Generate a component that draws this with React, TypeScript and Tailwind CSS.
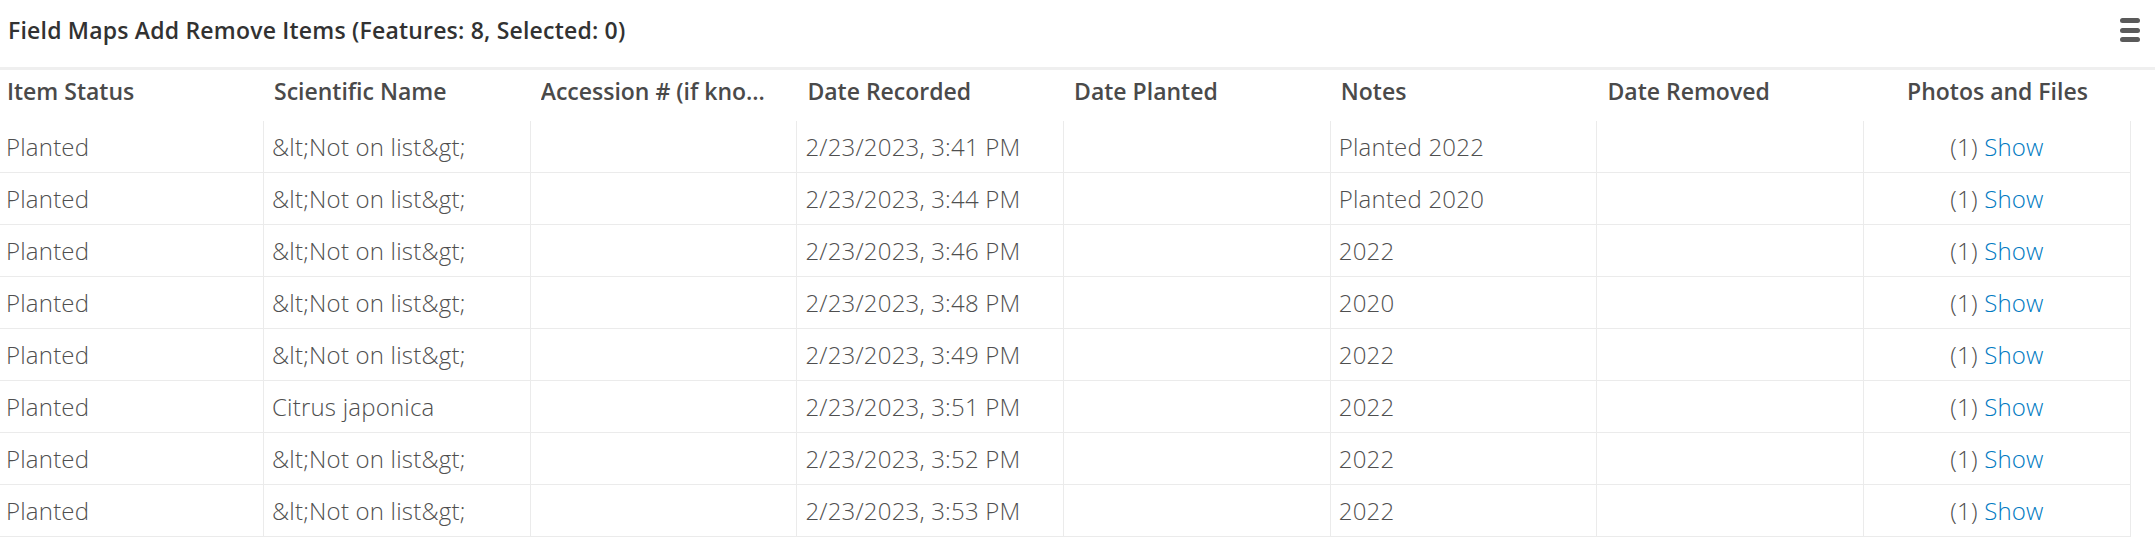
import React from "react";

const columns = [
  { label: "Item Status", first: true },
  { label: "Scientific Name" },
  { label: "Accession # (if known)", max: "max-w-[234px]" },
  { label: "Date Recorded" },
  { label: "Date Planted" },
  { label: "Notes" },
  { label: "Date Removed" },
  { label: "Photos and Files", center: true },
];

const rows = [
  { status: "Planted", name: "&lt;Not on list&gt;", recorded: "2/23/2023, 3:41 PM", notes: "Planted 2022" },
  { status: "Planted", name: "&lt;Not on list&gt;", recorded: "2/23/2023, 3:44 PM", notes: "Planted 2020" },
  { status: "Planted", name: "&lt;Not on list&gt;", recorded: "2/23/2023, 3:46 PM", notes: "2022" },
  { status: "Planted", name: "&lt;Not on list&gt;", recorded: "2/23/2023, 3:48 PM", notes: "2020" },
  { status: "Planted", name: "&lt;Not on list&gt;", recorded: "2/23/2023, 3:49 PM", notes: "2022" },
  { status: "Planted", name: "Citrus japonica", recorded: "2/23/2023, 3:51 PM", notes: "2022" },
  { status: "Planted", name: "&lt;Not on list&gt;", recorded: "2/23/2023, 3:52 PM", notes: "2022" },
  { status: "Planted", name: "&lt;Not on list&gt;", recorded: "2/23/2023, 3:53 PM", notes: "2022" },
];

const gridCols = "grid grid-cols-[264px_repeat(7,266.7px)] w-[2131px]";

function Cell({ children, center, first }: { children?: React.ReactNode; center?: boolean; first?: boolean }) {
  return (
    <div
      className={
        "flex items-center border-r border-[#ebebeb] overflow-hidden whitespace-nowrap " +
        (first ? "pl-[6px] pr-2 " : "px-2 ") +
        (center ? "justify-center" : "")
      }
    >
      {children}
    </div>
  );
}

export default function App() {
  return (
    <div className="w-[2155px] h-[544px] bg-white overflow-hidden" style={{ fontFamily: "'Open Sans', Lato, sans-serif" }}>
      <div className="h-[67px] flex items-start justify-between pl-2 pr-[15px]">
        <h1 className="pt-[13px] text-[23px] font-semibold text-[#323232] tracking-[0.2px]">
          Field Maps Add Remove Items (Features: 8, Selected: 0)
        </h1>
        <div className="mt-[18px] flex flex-col gap-[4.5px] w-5">
          <span className="block h-[5px] rounded-full bg-[#5a5a5a]" />
          <span className="block h-[5px] rounded-full bg-[#5a5a5a]" />
          <span className="block h-[5px] rounded-full bg-[#5a5a5a]" />
        </div>
      </div>
      <div className="h-[3px] bg-[#efefef]" />

      <div className={gridCols + " h-[51px]"}>
        {columns.map((c) => (
          <div
            key={c.label}
            className={
              "flex items-center pb-2 text-[23px] font-semibold text-[#4a4a4a] min-w-0 " +
              (c.first ? "pl-[7px] pr-[10px] " : "px-[10px] ") +
              (c.center ? "justify-center" : "")
            }
          >
            <span className={"truncate " + (c.max ?? "")}>{c.label}</span>
          </div>
        ))}
      </div>

      {rows.map((r, i) => (
        <div key={i} className={gridCols + " h-[52px] border-b border-[#ebebeb] text-[24px] font-light text-[#4f4f4f] tracking-[0.2px]"}>
          <Cell first>{r.status}</Cell>
          <Cell>{r.name}</Cell>
          <Cell />
          <Cell>{r.recorded}</Cell>
          <Cell />
          <Cell>{r.notes}</Cell>
          <Cell />
          <Cell center>
            (1)&nbsp;<a className="text-[#007ac2] cursor-pointer">Show</a>
          </Cell>
        </div>
      ))}
    </div>
  );
}
